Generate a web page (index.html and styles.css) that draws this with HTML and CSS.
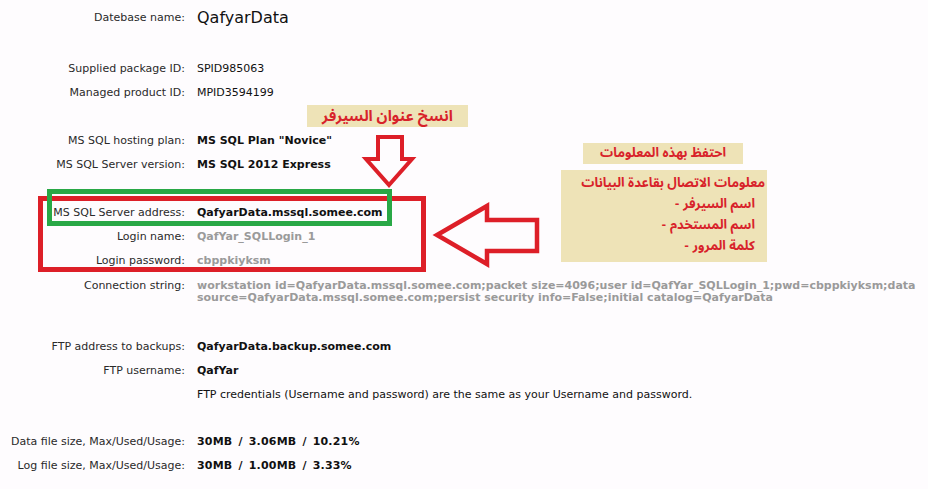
FILE: index.html
```html
<!DOCTYPE html>
<html lang="en">
<head>
<meta charset="utf-8">
<title>Database info</title>
<link rel="stylesheet" href="styles.css">
</head>
<body>
<div class="page">
  <div class="row row-title"><div class="label">Datebase name:</div><div class="value title">QafyarData</div></div>

  <div class="group g1">
    <div class="row"><div class="label">Supplied package ID:</div><div class="value">SPID985063</div></div>
    <div class="row"><div class="label">Managed product ID:</div><div class="value">MPID3594199</div></div>
  </div>

  <div class="group g2">
    <div class="row"><div class="label">MS SQL hosting plan:</div><div class="value bold">MS SQL Plan "Novice"</div></div>
    <div class="row"><div class="label">MS SQL Server version:</div><div class="value bold">MS SQL 2012 Express</div></div>
  </div>

  <div class="group g3">
    <div class="row"><div class="label">MS SQL Server address:</div><div class="value bold">QafyarData.mssql.somee.com</div></div>
    <div class="row"><div class="label">Login name:</div><div class="value bold gray">QafYar_SQLLogin_1</div></div>
    <div class="row"><div class="label">Login password:</div><div class="value bold gray">cbppkiyksm</div></div>
    <div class="row row-conn"><div class="label">Connection string:</div><div class="value bold gray">workstation id=QafyarData.mssql.somee.com;packet size=4096;user id=QafYar_SQLLogin_1;pwd=cbppkiyksm;data source=QafyarData.mssql.somee.com;persist security info=False;initial catalog=QafyarData</div></div>
  </div>

  <div class="group g4">
    <div class="row"><div class="label">FTP address to backups:</div><div class="value bold">QafyarData.backup.somee.com</div></div>
    <div class="row"><div class="label">FTP username:</div><div class="value bold">QafYar</div></div>
    <div class="row"><div class="label"></div><div class="value">FTP credentials (Username and password) are the same as your Username and password.</div></div>
  </div>

  <div class="group g5">
    <div class="row"><div class="label">Data file size, Max/Used/Usage:</div><div class="value bold wide">30MB / 3.06MB / 10.21%</div></div>
    <div class="row"><div class="label">Log file size, Max/Used/Usage:</div><div class="value bold wide">30MB / 1.00MB / 3.33%</div></div>
  </div>

  <!-- annotations -->
  <div class="note note-copy" dir="rtl">انسخ عنوان السيرفر</div>
  <div class="note note-keep" dir="rtl">احتفظ بهذه المعلومات</div>
  <div class="note note-list">
    <div class="nl-head" dir="rtl">معلومات الاتصال بقاعدة البيانات</div>
    <div class="nl-item"><span class="dash">-</span><span dir="rtl">اسم السيرفر</span></div>
    <div class="nl-item"><span class="dash">-</span><span dir="rtl">اسم المستخدم</span></div>
    <div class="nl-item"><span class="dash">-</span><span dir="rtl">كلمة المرور</span></div>
  </div>
  <div class="frame frame-red"></div>
  <div class="frame frame-green"></div>
  <svg class="arrows" width="928" height="489" viewBox="0 0 928 489">
    <polygon points="378,137 402,137 402,159 412,159 389,185 366,159 378,159" fill="none" stroke="#dd1f28" stroke-width="4" stroke-linejoin="miter"/>
    <polygon points="537,220 487,220 487,206 437,235 487,264 487,251 537,251" fill="none" stroke="#dd1f28" stroke-width="4.5" stroke-linejoin="miter"/>
  </svg>
</div>
</body>
</html>
```
FILE: styles.css
```css
html, body {
  margin: 0;
  padding: 0;
  background: #fefcfe;
}
.page {
  position: relative;
  width: 928px;
  height: 489px;
  overflow: hidden;
  font-family: "DejaVu Sans", Verdana, sans-serif;
  font-size: 11px;
  color: #222;
}
.row {
  display: grid;
  grid-template-columns: 185px 1fr;
  column-gap: 12px;
  height: 24px;
  line-height: 24px;
}
.label {
  text-align: right;
  white-space: nowrap;
  color: #2a2a2a;
}
.value {
  white-space: nowrap;
  color: #111;
}
.bold { font-weight: bold; }
.gray { color: #9a9a9a; }
.wide { word-spacing: 2px; letter-spacing: 0.2px; }
.row-title {
  height: 36px;
  line-height: 36px;
}
.title {
  font-size: 16px;
  color: #111;
}
.g1 { margin-top: 21px; }
.g2 { margin-top: 24px; }
.g3 { margin-top: 24px; }
.g4 { margin-top: 23px; }
.g5 { margin-top: 23px; }
.row-conn {
  height: auto;
  line-height: 12px;
  padding: 7px 0 8px;
}
.row-conn .value {
  white-space: normal;
  width: 724px;
}

/* annotations */
.note {
  position: absolute;
  background: #eee3b7;
  color: #d8222a;
  font-family: "Noto Sans Arabic", "Noto Naskh Arabic", "DejaVu Sans Condensed", "DejaVu Sans", sans-serif;
  font-weight: bold;
  text-align: center;
  white-space: nowrap;
}
.note-copy {
  left: 307px;
  top: 105px;
  width: 161px;
  height: 22px;
  font-size: 15px;
  line-height: 22px;
}
.note-keep {
  left: 583px;
  top: 143px;
  width: 160px;
  height: 21px;
  font-size: 13px;
  line-height: 21px;
}
.note-list {
  left: 561px;
  top: 170px;
  width: 206px;
  height: 92px;
  padding-top: 3px;
  box-sizing: border-box;
  font-size: 13px;
  line-height: 21px;
  text-align: right;
}
.nl-head { padding-right: 2px; text-align: right; }
.nl-item {
  display: flex;
  justify-content: flex-end;
  gap: 4px;
  height: 21px;
  padding-right: 12px;
}
.dash { font-weight: bold; }
.frame {
  position: absolute;
  box-sizing: border-box;
}
.frame-red {
  left: 38px;
  top: 196px;
  width: 388px;
  height: 76px;
  border: 5px solid #dd1f28;
}
.frame-green {
  left: 47px;
  top: 189px;
  width: 345px;
  height: 37px;
  border: 5px solid #29a846;
}
.arrows {
  position: absolute;
  left: 0;
  top: 0;
  pointer-events: none;
}
```
